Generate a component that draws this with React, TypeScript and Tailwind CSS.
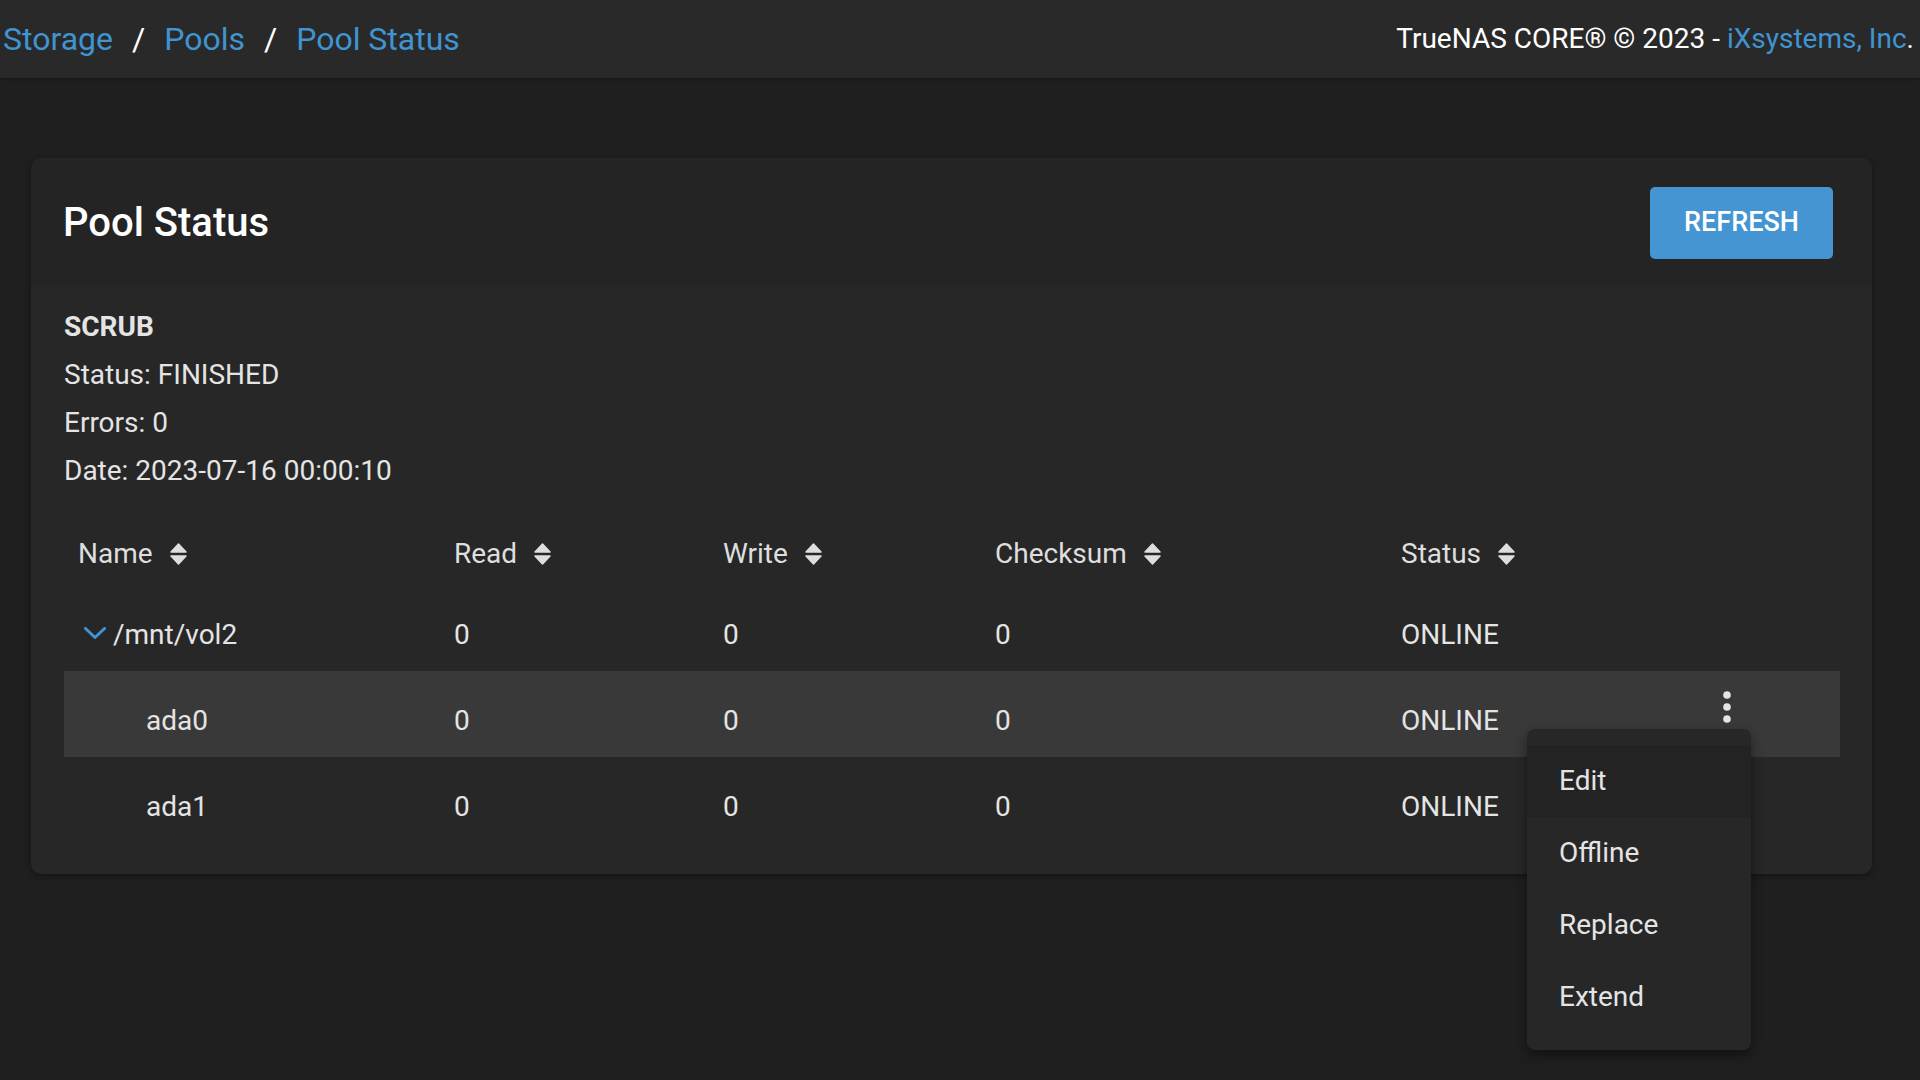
import React from "react";

const SortIcon = () => (
  <svg width="17" height="22" viewBox="0 0 17 22" className="ml-[17px] shrink-0">
    <path d="M8.5 1 L16 9 L1 9 Z" fill="#dedede" stroke="#dedede" strokeWidth="1.5" strokeLinejoin="round" />
    <path d="M1 13 L16 13 L8.5 21 Z" fill="#dedede" stroke="#dedede" strokeWidth="1.5" strokeLinejoin="round" />
  </svg>
);

const Chevron = () => (
  <svg width="22" height="12" viewBox="0 0 22 12" className="shrink-0">
    <polyline points="1.5,1.5 11,10.5 20.5,1.5" fill="none" stroke="#3f94d1" strokeWidth="3" strokeLinecap="round" strokeLinejoin="round" />
  </svg>
);

const Kebab = () => (
  <svg width="8" height="32" viewBox="0 0 8 32">
    <circle cx="4" cy="4" r="3.8" fill="#e4e4e4" />
    <circle cx="4" cy="16" r="3.8" fill="#e4e4e4" />
    <circle cx="4" cy="28" r="3.8" fill="#e4e4e4" />
  </svg>
);

type Row = { name: string; indent: boolean; expand?: boolean; hl?: boolean; kebab?: boolean };

const rows: Row[] = [
  { name: "/mnt/vol2", indent: false, expand: true },
  { name: "ada0", indent: true, hl: true, kebab: true },
  { name: "ada1", indent: true },
];

export default function App() {
  return (
    <div className="relative h-[1080px] w-[1920px] overflow-hidden bg-[#1f1f1f] font-['Roboto',sans-serif] text-[#e4e4e4]">
      {/* Top bar */}
      <div className="flex h-[78px] items-center justify-between bg-[#292929] pl-[3px] pr-[6px] shadow-[0_1px_3px_rgba(0,0,0,0.3)]">
        <div className="flex items-center text-[32px] leading-none">
          <span className="text-[#3f94d1]">Storage</span>
          <span className="mx-[19px] text-white">/</span>
          <span className="text-[#3f94d1]">Pools</span>
          <span className="mx-[19px] text-white">/</span>
          <span className="text-[#3f94d1]">Pool Status</span>
        </div>
        <div className="text-[28px] leading-none text-white">
          TrueNAS CORE® © 2023 - <span className="text-[#3f94d1]">iXsystems, Inc</span>.
        </div>
      </div>

      {/* Card */}
      <div className="ml-[31px] mt-[80px] w-[1841px] overflow-hidden rounded-[10px] bg-[#272727] shadow-[0_2px_6px_rgba(0,0,0,0.35)]">
        <div className="flex h-[129px] items-center justify-between bg-[#242424] pl-[32px] pr-[39px]">
          <h1 className="text-[40px] font-medium text-white">Pool Status</h1>
          <button className="flex h-[72px] w-[183px] items-center justify-center rounded-[5px] bg-[#4495d1] text-[27px] font-medium text-white">
            REFRESH
          </button>
        </div>

        <div className="pb-[31px] pl-[33px] pr-[32px] pt-[16px]">
          <div className="text-[28px] leading-[48px] text-[#e4e4e4]">
            <div className="font-bold">SCRUB</div>
            <div>Status: FINISHED</div>
            <div>Errors: 0</div>
            <div>Date: 2023-07-16 00:00:10</div>
          </div>

          <div className="mt-[14px] w-[1776px] text-[28px]">
            {/* header */}
            <div className="grid h-[76px] grid-cols-[390px_269px_272px_406px_310px_1fr] items-center text-[#dedede]">
              <div className="flex items-center pl-[14px] pt-[14px]">Name<SortIcon /></div>
              <div className="flex items-center pt-[14px]">Read<SortIcon /></div>
              <div className="flex items-center pt-[14px]">Write<SortIcon /></div>
              <div className="flex items-center pt-[14px]">Checksum<SortIcon /></div>
              <div className="flex items-center pt-[14px]">Status<SortIcon /></div>
              <div />
            </div>
            {rows.map((r) => (
              <div
                key={r.name}
                className={`grid h-[86px] grid-cols-[390px_269px_272px_406px_310px_1fr] items-center ${r.hl ? "bg-[#393939]" : ""}`}
              >
                <div className={`flex items-center pt-[14px] ${r.indent ? "pl-[82px]" : "pl-[20px]"}`}>
                  {r.expand && (
                    <span className="mr-[7px] flex items-center pb-[4px]">
                      <Chevron />
                    </span>
                  )}
                  {r.name}
                </div>
                <div className="pt-[14px]">0</div>
                <div className="pt-[14px]">0</div>
                <div className="pt-[14px]">0</div>
                <div className="pt-[14px]">ONLINE</div>
                <div className="flex items-center pb-[14px] pl-[12px]">{r.kebab && <Kebab />}</div>
              </div>
            ))}
          </div>
        </div>
      </div>

      {/* Menu overlay */}
      <div className="absolute left-[1527px] top-[729px] w-[224px] rounded-[8px] bg-[#272727] pb-[17px] pt-[16px] text-[28px] text-[#e4e4e4] shadow-[0_5px_12px_rgba(0,0,0,0.45)]">
        <div className="flex h-[72px] items-center bg-[#232323] pl-[32px]">Edit</div>
        <div className="flex h-[72px] items-center pl-[32px]">Offline</div>
        <div className="flex h-[72px] items-center pl-[32px]">Replace</div>
        <div className="flex h-[72px] items-center pl-[32px]">Extend</div>
      </div>
    </div>
  );
}
